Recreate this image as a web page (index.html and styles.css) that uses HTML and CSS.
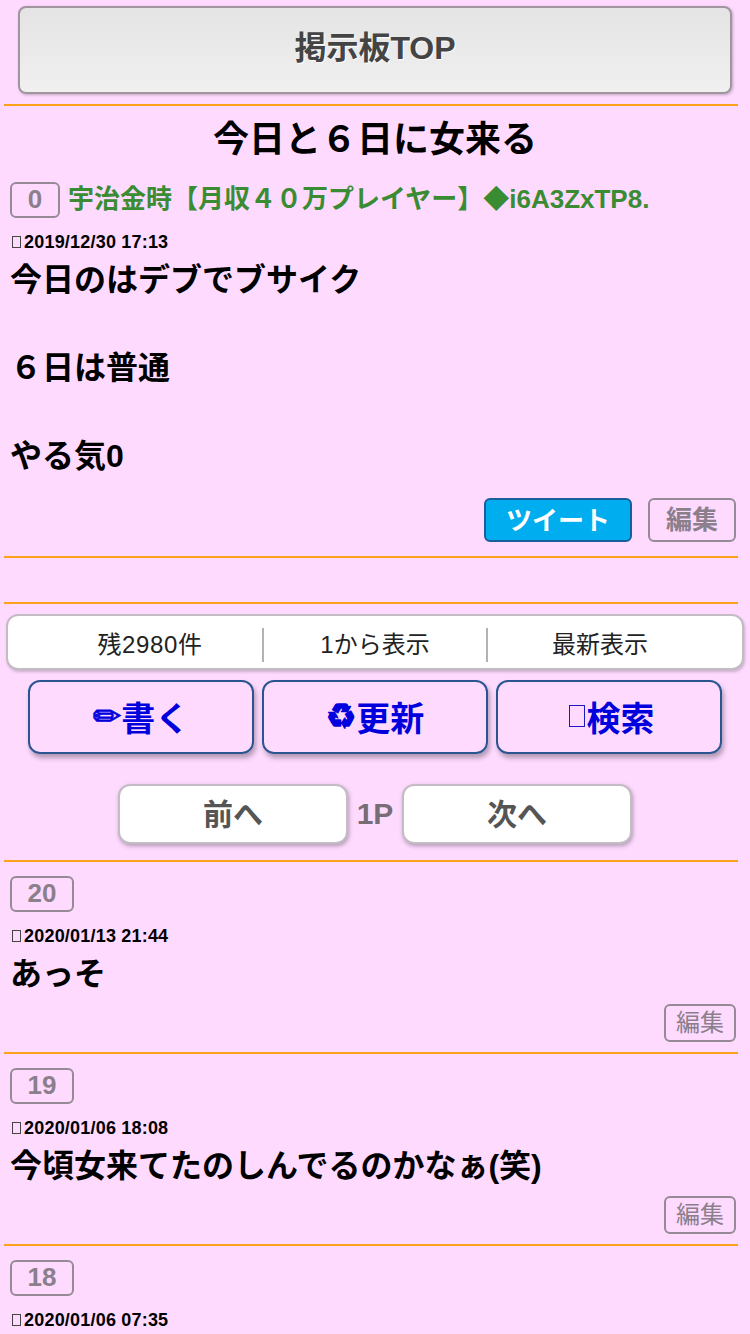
FILE: index.html
```html
<!DOCTYPE html>
<html lang="ja">
<head>
<meta charset="utf-8">
<title>今日と６日に女来る</title>
<link rel="stylesheet" href="styles.css">
</head>
<body>
<div class="top-wrap"><a class="top-btn">掲示板TOP</a></div>
<hr class="rule">
<h1 class="title">今日と６日に女来る</h1>
<section class="first">
  <div class="name-row"><span class="num num-first">0</span><span class="name">宇治金時【月収４０万プレイヤー】◆i6A3ZxTP8.</span></div>
  <div class="date"><span class="tofu tofu-sm"></span>2019/12/30 17:13</div>
  <div class="text">今日のはデブでブサイク<br><br>６日は普通<br><br>やる気0</div>
  <div class="actions"><a class="tweet">ツイート</a><a class="edit edit-big">編集</a></div>
</section>
<hr class="rule">
<div class="spacer"></div>
<hr class="rule">
<div class="info">
  <div class="info-cell info-first">残2980件</div>
  <div class="info-cell info-mid">1から表示</div>
  <div class="info-cell info-last">最新表示</div>
</div>
<div class="main-btns">
  <a class="main-btn"><span class="sym sym-pencil">✏</span>書く</a>
  <a class="main-btn"><span class="sym sym-recycle">♻</span>更新</a>
  <a class="main-btn"><span class="tofu tofu-lg"></span>検索</a>
</div>
<div class="pager">
  <a class="page-btn">前へ</a><span class="page-no">1P</span><a class="page-btn">次へ</a>
</div>
<hr class="rule">
<section class="post">
  <div class="num-row"><span class="num">20</span></div>
  <div class="date"><span class="tofu tofu-sm"></span>2020/01/13 21:44</div>
  <div class="text">あっそ</div>
  <div class="actions-small"><a class="edit">編集</a></div>
</section>
<hr class="rule">
<section class="post">
  <div class="num-row"><span class="num">19</span></div>
  <div class="date"><span class="tofu tofu-sm"></span>2020/01/06 18:08</div>
  <div class="text">今頃女来てたのしんでるのかなぁ(笑)</div>
  <div class="actions-small"><a class="edit">編集</a></div>
</section>
<hr class="rule">
<section class="post">
  <div class="num-row"><span class="num">18</span></div>
  <div class="date"><span class="tofu tofu-sm"></span>2020/01/06 07:35</div>
</section>
</body>
</html>
```
FILE: styles.css
```css
* { box-sizing: border-box; }
html, body { margin: 0; padding: 0; }
body {
  background: #fedaff;
  font-family: "Liberation Sans", "Noto Sans CJK JP", sans-serif;
  color: #000;
  padding: 0 12px 0 4px;
  overflow-x: hidden;
}
.top-wrap { padding: 6px 6px 0 14px; }
.top-btn {
  display: flex; align-items: center; justify-content: center;
  height: 88px;
  padding-bottom: 10px;
  border: 2px solid #a0949f;
  border-radius: 8px;
  background: linear-gradient(#e4e4e4, #f0f0f0);
  box-shadow: 1px 1px 3px rgba(0,0,0,.25);
  font-size: 32px; font-weight: 700; color: #444;
  text-shadow: 1px 1px 1px #fff;
}
.rule { height: 2px; margin: 0; border: 0; background: #fba11c; }
.top-wrap + .rule { margin-top: 10px; }
.title {
  margin: 0 -8px 0 0; padding-top: 6px; text-align: center;
  font-size: 36px; line-height: 56px; font-weight: 700;
}
.first { padding: 14px 2px 14px 6px; }
.name-row { display: flex; align-items: center; height: 36px; gap: 8px; }
.name { font-size: 26px; font-weight: 700; color: #3a8c32; white-space: nowrap; padding-bottom: 8px; }
.num {
  display: flex; align-items: center; justify-content: center;
  width: 64px; height: 36px;
  padding-bottom: 2px;
  border: 2px solid #958a96;
  border-radius: 6px;
  font-size: 26px; font-weight: 700; color: #8a7f8b;
}
.num-first { width: 50px; }
.date {
  display: flex; align-items: center;
  height: 18px; margin-top: 15px;
  font-size: 18px; font-weight: 700; letter-spacing: .2px;
}
.tofu { display: inline-block; flex: none; }
.tofu-sm { width: 9px; height: 12px; margin: 0 3px 0 2px; border: 1px solid #444; }
.tofu-lg { width: 16px; height: 22px; margin: 0 2px 0 5px; border: 1px solid #1a1ac0; }
.text { font-size: 32px; font-weight: 700; line-height: 44px; margin-top: 7px; }
.actions { display: flex; justify-content: flex-end; gap: 16px; margin-top: 20px; }
.tweet {
  display: flex; align-items: center; justify-content: center;
  width: 148px; height: 44px;
  padding-bottom: 4px;
  background: #00adef; border: 2px solid #1a5f9c; border-radius: 6px;
  font-size: 26px; font-weight: 700; color: #fff;
}
.edit {
  display: flex; align-items: center; justify-content: center;
  width: 72px; height: 38px;
  padding-bottom: 6px;
  border: 2px solid #958a96; border-radius: 6px;
  font-size: 24px; color: #8a7f8b;
}
.edit-big { width: 88px; height: 44px; font-size: 26px; font-weight: 700; }
.spacer { height: 44px; }
.info {
  display: flex; align-items: center;
  height: 56px; margin: 10px -6px 0 2px; padding-top: 6px;
  background: #fff; border: 2px solid #c4bcc4; border-radius: 12px;
  box-shadow: 1px 2px 3px rgba(0,0,0,.2);
  font-size: 24px; color: #222;
}
.info-cell { text-align: center; line-height: 34px; }
.info-first { width: 254px; padding-left: 30px; letter-spacing: .6px; }
.info-mid { width: 226px; border-left: 2px solid #b5b0b5; border-right: 2px solid #b5b0b5; }
.info-last { width: 224px; }
.main-btns { display: flex; gap: 8px; margin: 10px 0 0 24px; }
.main-btn {
  display: flex; align-items: center; justify-content: center;
  width: 226px; height: 74px;
  padding-bottom: 2px;
  border: 2px solid #2a5590; border-radius: 12px;
  box-shadow: 2px 4px 5px rgba(0,0,0,.3);
  font-size: 34px; font-weight: 700; color: #0000dd;
}
.sym { font-family: "DejaVu Sans", sans-serif; font-weight: 700; }
.sym-pencil { -webkit-text-stroke: .8px #0000dd; }
.sym-recycle { -webkit-text-stroke: 1.6px #0000dd; }
.pager { display: flex; align-items: center; margin: 30px 0 16px 114px; }
.page-btn {
  display: flex; align-items: center; justify-content: center;
  width: 230px; height: 60px;
  padding-bottom: 4px;
  background: #fff; border: 2px solid #c4bcc4; border-radius: 12px;
  box-shadow: 1px 2px 4px rgba(0,0,0,.3);
  font-size: 30px; font-weight: 700; color: #555;
}
.page-no { width: 54px; text-align: center; font-size: 30px; font-weight: 700; color: #766d77; }
.post { padding: 14px 2px 10px 6px; }
.num-row { display: flex; height: 36px; }
.actions-small { display: flex; justify-content: flex-end; margin-top: 8px; }
```
